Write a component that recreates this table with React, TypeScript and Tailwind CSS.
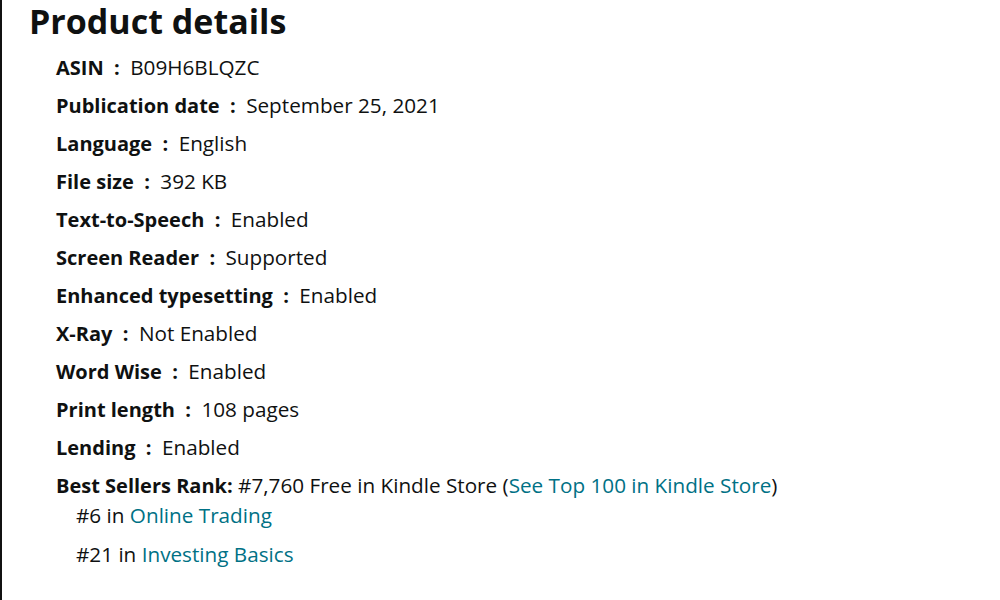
const details: [string, string][] = [
  ['ASIN', 'B09H6BLQZC'],
  ['Publication date', 'September 25, 2021'],
  ['Language', 'English'],
  ['File size', '392 KB'],
  ['Text-to-Speech', 'Enabled'],
  ['Screen Reader', 'Supported'],
  ['Enhanced typesetting', 'Enabled'],
  ['X-Ray', 'Not Enabled'],
  ['Word Wise', 'Enabled'],
  ['Print length', '108 pages'],
  ['Lending', 'Enabled'],
];

const linkClass = 'text-[#007185] hover:text-[#c7511f] hover:underline';

export default function App() {
  return (
    <div
      className="min-h-[600px] w-[1000px] border-l-2 border-[#111] bg-white text-[#0f1111]"
      style={{ fontFamily: "'Open Sans', 'Noto Sans', Arial, sans-serif" }}
    >
      <h2 className="pl-[27px] pt-0 text-[34px] font-bold leading-[42px]">Product details</h2>

      <ul className="mt-[11px] pl-[54px] text-[20.7px] leading-[28px]">
        {details.map(([label, value]) => (
          <li key={label} className="mb-[10px]">
            <span className="text-[20px] leading-[20px] font-bold">{label}</span>
            <span className="text-[20px] leading-[20px] font-bold"> &nbsp;: &nbsp;</span>
            <span>{value}</span>
          </li>
        ))}

        <li>
          <span className="text-[20px] leading-[20px] font-bold">Best Sellers Rank:</span> #7,760 Free in Kindle
          Store (
          <a href="#" className={linkClass}>
            See Top 100 in Kindle Store
          </a>
          )
          <ul className="mt-[2px] pl-[20px]">
            <li className="mb-[11px]">
              #6 in{' '}
              <a href="#" className={linkClass}>
                Online Trading
              </a>
            </li>
            <li>
              #21 in{' '}
              <a href="#" className={linkClass}>
                Investing Basics
              </a>
            </li>
          </ul>
        </li>
      </ul>
    </div>
  );
}
